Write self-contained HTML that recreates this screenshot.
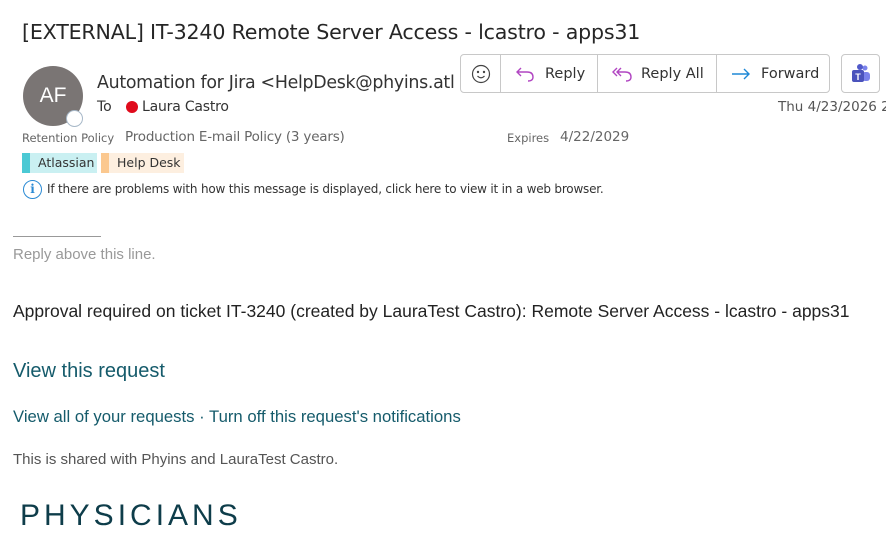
<!DOCTYPE html>
<html><head><meta charset="utf-8"><style>
*{margin:0;padding:0;box-sizing:border-box}
body{width:886px;height:507px;overflow:hidden;background:#fff;font-family:"Liberation Sans",sans-serif;position:relative;color:#262626}
.a{position:absolute;white-space:nowrap}
.seg{font-family:"DejaVu Sans","Liberation Sans",sans-serif}
</style></head><body>
<div class="a seg" style="left:22px;top:20px;font-size:20.6px;color:#262626;letter-spacing:-0.2px">[EXTERNAL] IT-3240 Remote Server Access - lcastro - apps31</div>
<div class="a" style="left:23px;top:66px;width:60px;height:60px;border-radius:50%;background:#7a7574;color:#fff;font-size:21px;line-height:60px;text-align:center">AF</div>
<div class="a" style="left:66px;top:110px;width:17px;height:17px;border-radius:50%;background:#fff;border:1.5px solid #a7b8c8"></div>
<div class="a seg" style="left:97px;top:73px;font-size:17.4px;color:#333;letter-spacing:-0.3px">Automation for Jira &lt;HelpDesk@phyins.atl</div>
<div class="a seg" style="left:97px;top:99px;font-size:14px;color:#333">To</div>
<div class="a" style="left:126px;top:101px;width:12px;height:12px;border-radius:50%;background:#e00b1c"></div>
<div class="a seg" style="left:142px;top:99px;font-size:14px;color:#333;letter-spacing:-0.2px">Laura Castro</div>
<div class="a" style="left:460px;top:54px;width:370px;height:39px;border:1px solid #c8c8c8;border-radius:4px;display:flex">
 <div style="width:40px;border-right:1px solid #c8c8c8;display:flex;align-items:center;justify-content:center"><svg width="20" height="20" viewBox="0 0 20 20" fill="none" stroke="#444" stroke-width="1.2"><circle cx="10" cy="10" r="8.5"/><circle cx="7" cy="8" r=".6" fill="#444"/><circle cx="13" cy="8" r=".6" fill="#444"/><path d="M6.5 12 Q10 15.5 13.5 12"/></svg></div>
 <div style="width:97px;border-right:1px solid #c8c8c8;display:flex;align-items:center;padding-left:14px" class="seg"><svg width="22" height="18" viewBox="0 0 22 18" fill="none" stroke="#b146c2" stroke-width="1.4"><path d="M6 3 L2 7 L6 11 M2 7 H12 Q18 7 18 12 Q18 16 13 16"/></svg><span style="font-size:14.5px;margin-left:8px;color:#333">Reply</span></div>
 <div style="width:119px;border-right:1px solid #c8c8c8;display:flex;align-items:center;padding-left:13px" class="seg"><svg width="24" height="18" viewBox="0 0 24 18" fill="none" stroke="#b146c2" stroke-width="1.4"><path d="M6 3 L2 7 L6 11 M10 3 L6 7 L10 11 M6 7 H14 Q20 7 20 12 Q20 16 15 16"/></svg><span style="font-size:14.5px;margin-left:6px;color:#333">Reply All</span></div>
 <div style="flex:1;display:flex;align-items:center;padding-left:13px" class="seg"><svg width="22" height="18" viewBox="0 0 22 18" fill="none" stroke="#1e88d6" stroke-width="1.4"><path d="M2 9 H19 M14 4 L19 9 L14 14"/></svg><span style="font-size:14.5px;margin-left:9px;color:#333">Forward</span></div>
</div>
<div class="a" style="left:841px;top:54px;width:39px;height:39px;border:1px solid #c8c8c8;border-radius:4px;display:flex;align-items:center;justify-content:center">
<svg width="22" height="22" viewBox="0 0 22 22"><circle cx="15" cy="5" r="2.5" fill="#7b83eb"/><rect x="12" y="9" width="8" height="9" rx="3" fill="#7b83eb"/><circle cx="10" cy="4" r="3" fill="#5059c9"/><rect x="2" y="7" width="12" height="12" rx="2" fill="#4b53bc"/><text x="8" y="17" font-size="9" fill="#fff" text-anchor="middle" font-family="Liberation Sans" font-weight="bold">T</text></svg></div>
<div class="a seg" style="left:778px;top:99px;font-size:13.5px;color:#555">Thu 4/23/2026 2</div>
<div class="a seg" style="left:22px;top:131px;font-size:11.5px;color:#666">Retention Policy</div>
<div class="a seg" style="left:125px;top:129px;font-size:13.5px;color:#666;letter-spacing:-0.2px">Production E-mail Policy (3 years)</div>
<div class="a seg" style="left:507px;top:131px;font-size:11.5px;color:#666">Expires</div>
<div class="a seg" style="left:560px;top:129px;font-size:13.5px;color:#666">4/22/2029</div>
<div class="a seg" style="left:22px;top:153px;width:75px;height:20px;background:#caf0f2;border-left:8px solid #4bc9d4;font-size:12.5px;line-height:20px;padding-left:8px;color:#333">Atlassian</div>
<div class="a seg" style="left:101px;top:153px;width:83px;height:20px;background:#fdefe0;border-left:8px solid #fbc88f;font-size:12.5px;line-height:20px;padding-left:8px;color:#333">Help Desk</div>
<div class="a" style="left:23px;top:180px;width:19px;height:19px;border-radius:50%;border:1.5px solid #2a8ad4;color:#2a8ad4;font-size:12px;font-weight:bold;text-align:center;line-height:16px;font-family:'DejaVu Serif',serif">i</div>
<div class="a seg" style="left:47px;top:182px;font-size:12px;color:#333;letter-spacing:-0.2px">If there are problems with how this message is displayed, click here to view it in a web browser.</div>
<div class="a" style="left:13px;top:236px;width:88px;height:1px;background:#999"></div>
<div class="a" style="left:13px;top:246px;font-size:15px;color:#999">Reply above this line.</div>
<div class="a" style="left:13px;top:301px;font-size:17.5px;color:#222">Approval required on ticket IT-3240 (created by LauraTest Castro): Remote Server Access - lcastro - apps31</div>
<div class="a" style="left:13px;top:360px;font-size:20px;color:#155b6b">View this request</div>
<div class="a" style="left:13px;top:407px;font-size:16.7px;color:#155b6b">View all of your requests · Turn off this request's notifications</div>
<div class="a" style="left:13px;top:451px;font-size:15px;color:#555">This is shared with Phyins and LauraTest Castro.</div>
<div class="a" style="left:20px;top:499px;font-size:30px;color:#0e3d4a;letter-spacing:4px">PHYSICIANS</div>
</body></html>
